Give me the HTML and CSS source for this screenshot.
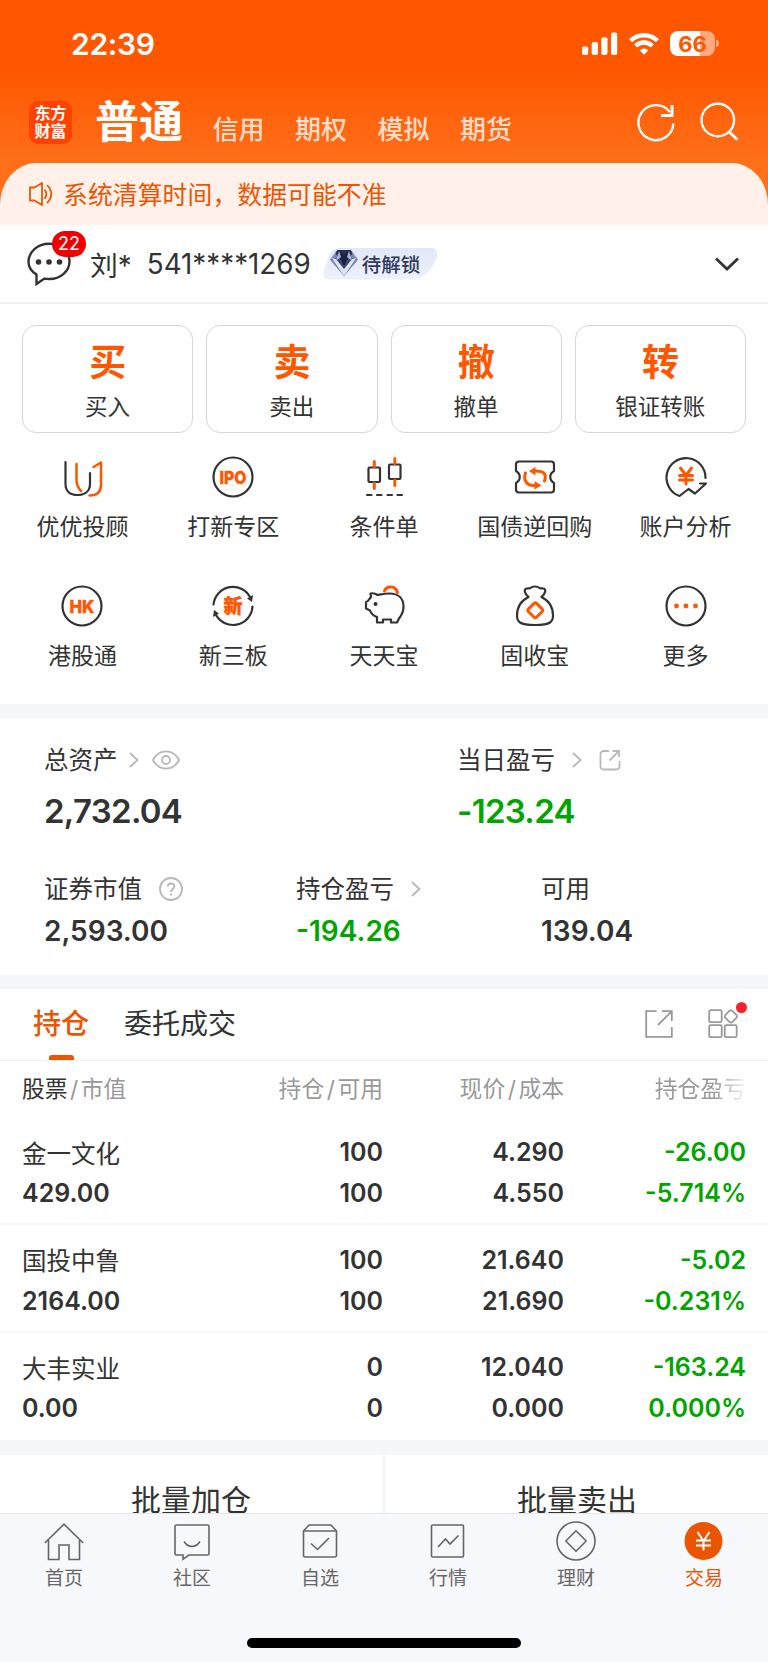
FILE: index.html
```html
<!DOCTYPE html>
<html lang="zh-CN">
<head>
  <meta charset="utf-8">
  <title>交易</title>
  <link rel="stylesheet" href="styles.css">
</head>
<body>
  <header class="header">
    <div class="status-bar">
      <span class="time">22:39</span>
      <div class="status-icons">
        <svg class="signal" width="36" height="24" viewBox="0 0 36 24" fill="#fff">
          <rect x="0" y="14.5" width="6.2" height="8.5" rx="2"/>
          <rect x="9.7" y="10" width="6.2" height="13" rx="2"/>
          <rect x="19.3" y="5.3" width="6.2" height="17.7" rx="2"/>
          <rect x="29" y="0.5" width="6.2" height="22.5" rx="2"/>
        </svg>
        <svg class="wifi" width="30" height="24" viewBox="0 0 30 24" fill="none" stroke="#fff" stroke-width="4.4">
          <path d="M1.6 8.8a19 19 0 0 1 26.8 0"/>
          <path d="M6.6 14a12 12 0 0 1 16.8 0"/>
          <path d="M15 22.8l-4.4-4.5a6.3 6.3 0 0 1 8.8 0z" fill="#fff" stroke="none"/>
        </svg>
        <div class="battery"><span>66</span></div>
      </div>
    </div>
    <nav class="account-types">
      <div class="logo"><span>东方</span><span>财富</span></div>
      <a class="type active">普通</a>
      <a class="type">信用</a>
      <a class="type">期权</a>
      <a class="type">模拟</a>
      <a class="type">期货</a>
      <svg class="refresh" width="40" height="40" viewBox="0 0 40 40" fill="none" stroke="#fff" stroke-width="2.4">
        <path d="M37.4 21.5a17.500 17.500 0 1 1-3.500-11.400"/>
        <path d="M36 3v10.400H25" stroke-width="3"/>
      </svg>
      <svg class="search" width="40" height="40" viewBox="0 0 40 40" fill="none" stroke="#fff" stroke-width="2.4">
        <circle cx="18.8" cy="18" r="16.3"/>
        <path d="M30 29.5l8.300 8.300" stroke-width="3"/>
      </svg>
    </nav>
  </header>

  <div class="notice">
    <svg width="24" height="26" viewBox="0 0 24 26" fill="none" stroke="#ea5504" stroke-width="1.8">
      <path d="M1 6.500h4.500L13 2v22l-7.500-4.500H1z" stroke-linejoin="round"/>
      <path d="M15.500 8.500c2.300 2.800 2.300 6.400 0 9.200M18 4.200c5.600 5 5.600 12.800 0 17.800"/>
    </svg>
    <span>系统清算时间，数据可能不准</span>
  </div>

  <div class="account">
    <div class="message">
      <svg width="44" height="44" viewBox="0 0 44 44" fill="none" stroke="#333" stroke-width="2.4">
        <path d="M9.500 42v-9.500C4.500 29.500 1.500 25 1.500 20 1.500 10 10.500 1.800 22 1.800S42.500 10 42.500 19.500 33.500 37 22.500 37c-2 0-3.500-.1-5-.4z" stroke-linejoin="miter"/>
        <g fill="#333" stroke="none"><circle cx="11.500" cy="20" r="2.800"/><circle cx="22" cy="20" r="2.800"/><circle cx="32.500" cy="20" r="2.800"/></g>
      </svg>
      <span class="count">22</span>
    </div>
    <span class="owner">刘*</span>
    <span class="number">541****1269</span>
    <div class="level">
      <svg width="30" height="27" viewBox="0 0 30 27">
        <path d="M7 1h16l6 9-14 16L1 10z" fill="#8d9cc4"/>
        <path d="M8 0h14l3 9-10 9L5 9z" fill="#28304f"/>
        <path d="M1 9l6-5 8 12 8-12 6 5-14 17z" fill="#7d86ad"/>
        <path d="M5 8l5 1 5 7 5-7 5-1-10 14z" fill="#39406b"/>
        <path d="M3 8l4 1 8 10 8-10 4-1-12 18z" fill="#dfe4f2"/>
        <path d="M10 1l5 4 5-4-2 9-3 6-3-6z" fill="#1c2340"/>
        <path d="M10 1l2 6-5 4zM20 1l-2 6 5 4z" fill="#a9b6dc"/>
      </svg>
      <span>待解锁</span>
    </div>
    <svg class="expand" width="24" height="14" viewBox="0 0 24 14" fill="none" stroke="#333" stroke-width="2.800">
      <path d="M1 1.500l11 10.500 11-10.500"/>
    </svg>
  </div>

  <div class="trade-actions">
    <a class="trade-card"><b>买</b><span>买入</span></a>
    <a class="trade-card"><b>卖</b><span>卖出</span></a>
    <a class="trade-card"><b>撤</b><span>撤单</span></a>
    <a class="trade-card"><b>转</b><span>银证转账</span></a>
  </div>

  <div class="tools">
    <a class="tool">
      <svg viewBox="0 0 44 44">
        <path d="M5.500 7v22c0 7 4.500 11 12 11S30 36 30 29V18"/>
        <path class="hot" d="M16.500 9v16c0 6 2 8 4.500 11M33.500 12l7.500-4.500v22.500c0 7-4 10.500-11.500 10.500"/>
      </svg>
      <span>优优投顾</span>
    </a>
    <a class="tool">
      <svg viewBox="0 0 44 44">
        <circle cx="22" cy="22" r="19.500"/>
        <text x="22" y="28.500" textLength="27" lengthAdjust="spacingAndGlyphs" font-size="18">IPO</text>
      </svg>
      <span>打新专区</span>
    </a>
    <a class="tool">
      <svg viewBox="0 0 44 44">
        <rect x="6.500" y="12.500" width="11.500" height="14.500" rx="1"/>
        <rect x="27" y="9.500" width="11.500" height="14.500" rx="1"/>
        <path class="hot thick" d="M12.300 6.500v5M12.300 28v5.500M32.800 3.500v5M32.800 25v5.500"/>
        <path d="M5 40h4.500M15 40h4.500M25.500 40H30M35.500 40H40"/>
      </svg>
      <span>条件单</span>
    </a>
    <a class="tool">
      <svg viewBox="0 0 44 44">
        <path d="M6 6.500h32q3 0 3 3V16c-5 3-5 9 0 12v6.500q0 3-3 3H6q-3 0-3-3V28c5-3 5-9 0-12V9.500q0-3 3-3z"/>
        <path class="hot thick" d="M12.500 18c-2.500 7 1 12.500 8.500 12.500h2M31.500 26c2.500-7-1-10-8.500-10h-2"/>
        <path class="hot-fill" d="M22.500 12v8.500L16 16zM21.500 26v8.500l7-4z"/>
      </svg>
      <span>国债逆回购</span>
    </a>
    <a class="tool">
      <svg viewBox="0 0 44 44">
        <path d="M41.500 23A19.500 19.500 0 1 0 15.500 41l9-7 6.500 4.500 11-10h-6"/>
        <path class="hot thick" d="M16.500 13l5.500 7.500 5.500-7.500M22 20.500V29M15.500 20.500h13M15.500 25h13"/>
      </svg>
      <span>账户分析</span>
    </a>
    <a class="tool">
      <svg viewBox="0 0 44 44">
        <circle cx="22" cy="22" r="19.500"/>
        <text x="22" y="28.500" textLength="25" lengthAdjust="spacingAndGlyphs" font-size="18">HK</text>
      </svg>
      <span>港股通</span>
    </a>
    <a class="tool">
      <svg viewBox="0 0 44 44">
        <path d="M2.500 20.500A19.500 19.500 0 0 1 39.500 14M41.500 22.500A19.500 19.500 0 0 1 4.500 30"/>
        <path class="dark-fill" d="M42 11l-1 7-5-3.500zM2 33l1-7 5 3.500z"/>
        <text x="22" y="29" font-size="19">新</text>
      </svg>
      <span>新三板</span>
    </a>
    <a class="tool">
      <svg viewBox="0 0 44 44">
        <path d="M8.500 9.500c2-.5 5 0 7 1.500 3-.5 7-1.500 12-1.500 9 0 14 5 14 13 0 6-2 9-4.500 12l-2 4h-6v-3h-8v3h-6v-5.500c-4-1.500-6-3.500-7-6.500l-4-2v-6.500c2 0 3-2.500 5-5z"/>
        <circle class="dark-fill" cx="13.500" cy="20" r="2"/>
        <path class="hot thick" d="M22.500 7c2-5.500 11-5.500 13 1.500"/>
      </svg>
      <span>天天宝</span>
    </a>
    <a class="tool">
      <svg viewBox="0 0 44 44">
        <path d="M15.500 13c-4-3-5-8-2-8.500 2.500-.5 3 .5 4-.5 2-2 7-2 9 0 1 1 1.500 0 4 .5 3 .5 2 5.500-2 8.500 8 4 11.500 10 11.500 18.500 0 6-2 9.500-18 9.500S4 37.500 4 31.500C4 23 7.500 17 15.500 13z"/>
        <rect class="hot thick" x="16.500" y="20.500" width="11.500" height="11.500" rx="2" transform="rotate(45 22.200 26.300)"/>
      </svg>
      <span>固收宝</span>
    </a>
    <a class="tool">
      <svg viewBox="0 0 44 44">
        <circle cx="22" cy="22" r="19.500"/>
        <g class="hot-fill"><circle cx="12.500" cy="22" r="2.400"/><circle cx="22" cy="22" r="2.400"/><circle cx="31.500" cy="22" r="2.400"/></g>
      </svg>
      <span>更多</span>
    </a>
  </div>

  <section class="assets">
    <div class="asset-row main">
      <div class="asset">
        <div class="asset-label">总资产
          <svg class="arrow" width="10" height="16" viewBox="0 0 10 16"><path d="M1 1l7.500 7L1 15"/></svg>
          <svg class="eye" width="28" height="20" viewBox="0 0 28 20"><path d="M1 10C7-1.500 21-1.500 27 10 21 21.500 7 21.500 1 10z"/><circle cx="14" cy="10" r="4"/></svg>
        </div>
        <div class="asset-value">2,732.04</div>
      </div>
      <div class="asset">
        <div class="asset-label">当日盈亏
          <svg class="arrow wide" width="10" height="16" viewBox="0 0 10 16"><path d="M1 1l7.500 7L1 15"/></svg>
          <svg class="share" width="22" height="22" viewBox="0 0 22 22"><path d="M10 2H5Q1.500 2 1.500 5.500V17q0 3.500 3.500 3.500h12q3.500 0 3.500-3.500v-5M13.500 2h6.500v6M20 2l-9.500 9.500"/></svg>
        </div>
        <div class="asset-value down">-123.24</div>
      </div>
    </div>
    <div class="asset-row">
      <div class="asset">
        <div class="asset-label">证券市值
          <svg class="help" width="24" height="24" viewBox="0 0 24 24"><circle cx="12" cy="12" r="11"/><path d="M8.800 9.500c0-4 6.500-4 6.500 0 0 2.500-3.300 2.500-3.300 5.500M12 16.500v2"/></svg>
        </div>
        <div class="asset-value">2,593.00</div>
      </div>
      <div class="asset">
        <div class="asset-label">持仓盈亏
          <svg class="arrow wide" width="10" height="16" viewBox="0 0 10 16"><path d="M1 1l7.500 7L1 15"/></svg>
        </div>
        <div class="asset-value down">-194.26</div>
      </div>
      <div class="asset">
        <div class="asset-label">可用</div>
        <div class="asset-value">139.04</div>
      </div>
    </div>
  </section>

  <section class="positions">
    <div class="tabs">
      <a class="tab active">持仓</a>
      <a class="tab">委托成交</a>
      <svg class="export" width="28" height="28" viewBox="0 0 28 28"><path d="M11.500 1.200H1.200v25.600h25.600V17M17 1.200h9.800V11M26.800 1.200L13 15"/></svg>
      <div class="widgets">
        <svg width="30" height="30" viewBox="0 0 30 30">
          <rect x="1.200" y="1.200" width="12.500" height="12" rx="1.500"/>
          <rect x="1.200" y="16.200" width="12.500" height="12" rx="1.500"/>
          <rect x="16.700" y="16.200" width="12" height="12" rx="1.500"/>
          <rect x="18" y="2.500" width="9.800" height="9.800" rx="2.500" transform="rotate(45 22.900 7.400)"/>
        </svg>
        <i class="dot"></i>
      </div>
    </div>
    <div class="row head">
      <span><em>股票</em><i>/</i>市值</span>
      <span>持仓<i>/</i>可用</span>
      <span>现价<i>/</i>成本</span>
      <span class="faded">持仓盈亏</span>
    </div>
    <div class="row">
      <span class="name">金一文化</span><span>100</span><span>4.290</span><span class="down">-26.00</span>
      <span>429.00</span><span>100</span><span>4.550</span><span class="down">-5.714%</span>
    </div>
    <div class="row">
      <span class="name">国投中鲁</span><span>100</span><span>21.640</span><span class="down">-5.02</span>
      <span>2164.00</span><span>100</span><span>21.690</span><span class="down">-0.231%</span>
    </div>
    <div class="row">
      <span class="name">大丰实业</span><span>0</span><span>12.040</span><span class="down">-163.24</span>
      <span>0.00</span><span>0</span><span>0.000</span><span class="down">0.000%</span>
    </div>
  </section>

  <div class="batch">
    <a>批量加仓</a>
    <a>批量卖出</a>
  </div>

  <footer class="tabbar">
    <nav>
      <a>
        <svg viewBox="0 0 40 40"><path d="M.8 22L20 3.200 39.200 22M4.500 19v19.500H15V24h10v14.500h10.500V19"/></svg>
        <span>首页</span>
      </a>
      <a>
        <svg viewBox="0 0 40 40"><path d="M4.500 4h31q1.500 0 1.500 1.500v27q0 1.500-1.500 1.500H17l-6 4.200V34H4.500Q3 34 3 32.500v-27Q3 4 4.500 4zM12 20.500c4 6.500 12 6.500 16 0"/></svg>
        <span>社区</span>
      </a>
      <a>
        <svg viewBox="0 0 40 40"><path d="M3.500 10L9 4h22l5.500 6v24q0 2-2 2h-29q-2 0-2-2zM3.500 10h33M11 22.500l6.500 6L29 17"/></svg>
        <span>自选</span>
      </a>
      <a>
        <svg viewBox="0 0 40 40"><rect x="3.500" y="4" width="32" height="32" rx="1"/><path d="M10 26l7.500-8 4.500 5 8.500-8.500"/></svg>
        <span>行情</span>
      </a>
      <a>
        <svg viewBox="0 0 40 40"><circle cx="20" cy="20" r="19"/><path d="M20 9.800L30.200 20 20 30.200 9.800 20z" stroke-linejoin="round"/></svg>
        <span>理财</span>
      </a>
      <a class="current">
        <svg viewBox="0 0 40 40"><circle cx="19.500" cy="20" r="19"/><path d="M13.500 11l6 9 6-9M19.500 20v9.500M12 19.500h15M12 24.500h15"/></svg>
        <span>交易</span>
      </a>
    </nav>
    <div class="home-indicator"></div>
  </footer>
</body>
</html>
```
FILE: styles.css
```css
* {
  box-sizing: border-box;
}
body {
  margin: 0;
  width: 768px;
  height: 1662px;
  overflow: hidden;
  display: flex;
  flex-direction: column;
  background: #fff;
  color: #333;
  font-family: Inter, "Noto Sans CJK SC", sans-serif;
}
body > * {
  flex-shrink: 0;
}
svg {
  display: block;
  flex-shrink: 0;
}
i,
em {
  font-style: normal;
}

/* header */
.header {
  height: 206px;
  margin-bottom: -43px;
  background: linear-gradient(#ff5600 0, #ff5600 66px, #ff6f19 163px, #ff711c 206px);
  color: #fff;
}
.status-bar {
  height: 87px;
  padding: 0 50px 0 71px;
  display: flex;
  justify-content: space-between;
  align-items: center;
}
.time {
  font-size: 30px;
  font-weight: 600;
  letter-spacing: -0.3px;
}
.status-icons {
  display: flex;
  align-items: center;
  gap: 11px;
}
.battery {
  position: relative;
  width: 45px;
  height: 25px;
  margin-right: 3px;
  border-radius: 8px;
  background: linear-gradient(90deg, #fff 30px, #ffaa80 30px);
  color: #ff5600;
  font-size: 22px;
  font-weight: 700;
  line-height: 26px;
  text-align: center;
}
.battery::after {
  content: "";
  position: absolute;
  left: 46px;
  top: 9px;
  width: 3px;
  height: 7px;
  border-radius: 0 3px 3px 0;
  background: #ffaa80;
}
.account-types {
  height: 70px;
  padding: 0 29px;
  display: flex;
  align-items: center;
}
.logo {
  width: 43px;
  height: 43px;
  border-radius: 9px;
  background: #ff4200;
  display: flex;
  flex-direction: column;
  align-items: center;
  justify-content: center;
  font-size: 16px;
  font-weight: 700;
  line-height: 18px;
}
.type {
  padding-top: 15px;
  font-size: 26px;
  font-weight: 500;
  line-height: 40px;
  color: #ffddcb;
}
.type + .type {
  margin-left: 30.500px;
}
.type.active {
  margin-left: 23px;
  margin-right: -1px;
  padding-top: 0;
  font-size: 44px;
  font-weight: 700;
  color: #fff;
}
.refresh {
  margin-left: auto;
}
.search {
  margin-left: 23px;
}
.notice {
  height: 62px;
  padding: 0 29px;
  border-radius: 36px 36px 0 0 / 42px 42px 0 0;
  background: #fff1e9;
  color: #ea5504;
  display: flex;
  align-items: center;
  gap: 10px;
  font-size: 24.800px;
  letter-spacing: 0.1px;
}
.notice span {
  margin-top: -2px;
}

/* account */
.account {
  height: 79px;
  padding: 0 29px 0 27px;
  border-bottom: 2px solid #f0f0f0;
  background: #fff;
  display: flex;
  align-items: center;
  font-size: 27.800px;
}
.message {
  position: relative;
  padding-top: 1px;
}
.count {
  position: absolute;
  left: 25px;
  top: -10px;
  width: 34px;
  height: 26px;
  border-radius: 13px;
  background: #f00000;
  color: #fff;
  font-size: 18px;
  line-height: 26px;
  text-align: center;
}
.owner {
  margin-left: 19px;
}
.number {
  margin-left: 15px;
}
.level {
  width: 115px;
  height: 32px;
  margin-left: 12px;
  padding-left: 6px;
  display: flex;
  align-items: center;
  gap: 3px;
  background: linear-gradient(#e2e8f7, #eef1fd);
  clip-path: path("M17 0H107Q116 1 114 10L110 18Q103 32 88 32H6Q-1 31 1 23L6 9Q9 1 17 0Z");
  color: #2f3a5c;
  font-size: 19.500px;
  font-weight: 500;
}
.expand {
  margin-left: auto;
}

/* buy, sell, cancel, transfer */
.trade-actions {
  padding: 21px 22px 0;
  display: grid;
  grid-template-columns: repeat(4, 1fr);
  gap: 13px;
}
.trade-card {
  height: 108px;
  border: 1px solid #d6d6d6;
  border-radius: 14px;
  display: flex;
  flex-direction: column;
  align-items: center;
}
.trade-card b {
  margin-top: 16px;
  color: #ff5600;
  font-size: 37px;
  line-height: 42px;
}
.trade-card span {
  margin-top: 8px;
  font-size: 22.500px;
  line-height: 30px;
}

/* shortcuts */
.tools {
  height: 270.500px;
  padding: 22px 7px 0;
  display: grid;
  grid-template-columns: repeat(5, 1fr);
  grid-auto-rows: 129px;
}
.tool {
  display: flex;
  flex-direction: column;
  align-items: center;
  font-size: 23px;
  line-height: 30px;
}
.tool svg {
  width: 44px;
  height: 44px;
  margin-bottom: 13px;
  fill: none;
  stroke: #333;
  stroke-width: 2.200;
  stroke-linecap: round;
  stroke-linejoin: round;
}
.tool .hot {
  stroke: #ff5600;
  stroke-width: 2.500;
}
.tool .thick {
  stroke-width: 3;
}
.tool .hot-fill {
  fill: #ff5600;
  stroke: none;
}
.tool .dark-fill {
  fill: #333;
  stroke: none;
}
.tool text {
  fill: #ff5600;
  stroke: #ff5600;
  stroke-width: 0.4;
  font-weight: 800;
  text-anchor: middle;
}

/* assets */
.assets {
  height: 285px;
  border: solid #f6f7fa;
  border-width: 14px 0;
}
.asset-row {
  display: grid;
  grid-template-columns: 252px 245px 1fr;
  padding-left: 44px;
}
.asset-row.main {
  grid-template-columns: 413px 1fr;
  height: 157px;
  padding-top: 28px;
}
.asset-label {
  height: 30px;
  display: flex;
  align-items: center;
  font-size: 24.500px;
  line-height: 30px;
  padding-bottom: 1px;
}
.asset-label svg {
  fill: none;
  stroke: #b8b8b8;
  stroke-width: 1.800;
}
.arrow {
  margin-left: 11px;
}
.arrow.wide {
  margin-left: 17px;
}
.eye {
  margin-left: 13px;
}
.share {
  margin-left: 17px;
}
.help {
  margin-left: 17px;
}
.asset-value {
  margin-top: 6px;
  font-size: 28px;
  font-weight: 600;
  line-height: 40px;
}
.main .asset-value {
  margin-top: 15px;
  font-size: 33px;
  letter-spacing: -0.7px;
}
.down {
  color: #00a500;
}

/* positions */
.tabs {
  height: 72px;
  padding: 0 30px 0 33px;
  border-bottom: 1px solid #f0f0f0;
  display: flex;
  align-items: center;
  font-size: 28px;
}
.tab {
  position: relative;
  height: 72px;
  line-height: 73px;
  margin-right: 35px;
}
.tab.active {
  color: #ea5504;
  font-weight: 500;
}
.tab.active::after {
  content: "";
  position: absolute;
  left: 16px;
  bottom: 0;
  width: 25px;
  height: 5px;
  border-radius: 3px 3px 0 0;
  background: #ea5504;
}
.tabs svg {
  fill: none;
  stroke: #999;
  stroke-width: 1.800;
}
.export {
  margin-left: auto;
}
.widgets {
  position: relative;
  margin-left: 35px;
}
.dot {
  position: absolute;
  left: 28px;
  top: -7px;
  width: 11px;
  height: 11px;
  border-radius: 50%;
  background: #f5222d;
}
.row {
  height: 107.500px;
  padding: 14px 22px 0;
  border-bottom: 2px solid #f7f7f7;
  display: grid;
  grid-template-columns: 180px 181px 181px 182px;
  grid-auto-rows: 41px;
  align-items: center;
  text-align: right;
  font-size: 25px;
  font-weight: 600;
}
.row span:nth-child(4n + 1) {
  text-align: left;
}
.row .name {
  font-size: 24.500px;
  font-weight: 400;
}
.row:last-child {
  border-bottom: 0;
}
.row.head {
  height: 57px;
  padding-top: 6px;
  border: 0;
  color: #999;
  font-size: 22.800px;
  font-weight: 400;
}
.head em {
  color: #333;
}
.head i {
  margin: 0 2.500px;
}
.faded {
  -webkit-mask-image: linear-gradient(90deg, #000 150px, transparent 185px);
  mask-image: linear-gradient(90deg, #000 150px, transparent 185px);
}

/* batch buttons, cut off by the tab bar */
.batch {
  height: 72.500px;
  border-top: 15px solid #f6f7fa;
  display: grid;
  grid-template-columns: 1fr 1fr;
  gap: 4px;
  overflow: hidden;
  background: #f6f7fa;
}
.batch a {
  background: #fff;
  font-size: 30px;
  line-height: 91px;
  text-align: center;
}

/* bottom bar */
.tabbar {
  height: 149.500px;
  border-top: 1px solid #e6e6ea;
  background: #f7f8fb;
  position: relative;
}
.tabbar nav {
  display: grid;
  grid-template-columns: repeat(6, 1fr);
}
.tabbar a {
  padding-top: 7px;
  display: flex;
  flex-direction: column;
  align-items: center;
  color: #666;
  font-size: 19px;
  line-height: 28px;
}
.tabbar svg {
  width: 40px;
  height: 40px;
  margin-bottom: 4px;
  fill: none;
  stroke: #666;
  stroke-width: 1.600;
}
.tabbar .current {
  color: #ea5504;
}
.current circle {
  fill: #ea5504;
  stroke: none;
}
.current path {
  stroke: #fff;
  stroke-width: 2;
}
.home-indicator {
  position: absolute;
  left: 247px;
  bottom: 14.500px;
  width: 274px;
  height: 9.500px;
  border-radius: 5px;
  background: #000;
}
```
